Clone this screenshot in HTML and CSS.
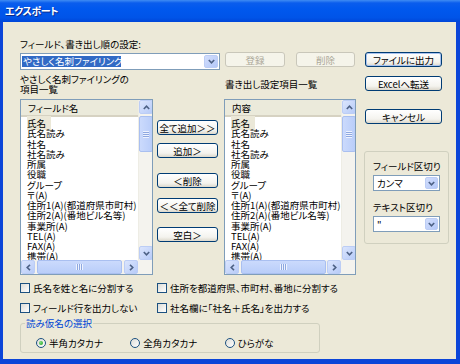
FILE: index.html
```html
<!DOCTYPE html>
<html>
<head>
    <meta charset="utf-8">
    <title>エクスポート</title>
    <link rel="stylesheet" href="styles.css">
</head>
<body>
    <div class="window">
        <div class="titlebar">エクスポート</div>
        <div class="client">
            <div class="main">
                <div class="lbl top-lbl">フィールド、書き出し順の設定:</div>

                <div class="combo-row">
                    <div class="combo">
                        <span class="combo-sel">やさしく名刺ファイリング</span>
                        <span class="drop"><svg width="7" height="5" viewBox="0 0 7 5"><polyline points="0.8,1 3.5,3.8 6.2,1" /></svg></span>
                    </div>
                    <div class="btn disabled btn-reg">登録</div>
                    <div class="btn disabled btn-del">削除</div>
                </div>

                <div class="list-labels">
                    <div class="lbl src-lbl">やさしく名刺ファイリングの<br>項目一覧</div>
                    <div class="lbl dst-lbl">書き出し設定項目一覧</div>
                </div>

                <div class="lists">
                    <div class="listview">
                        <div class="lv-content">
                            <div class="lv-head">フィールド名</div>
                            <div class="lv-items">
                                <div><span class="focus">氏名</span></div>
                                <div>氏名読み</div>
                                <div>社名</div>
                                <div>社名読み</div>
                                <div>所属</div>
                                <div>役職</div>
                                <div>グループ</div>
                                <div>〒(A)</div>
                                <div>住所1(A)(都道府県市町村)</div>
                                <div>住所2(A)(番地ビル名等)</div>
                                <div>事業所(A)</div>
                                <div>TEL(A)</div>
                                <div>FAX(A)</div>
                                <div>携帯(A)</div>
                            </div>
                        </div>
                        <div class="vscroll">
                            <span class="sb-btn"><svg width="7" height="5" viewBox="0 0 7 5"><polyline points="0.8,4 3.5,1.2 6.2,4" /></svg></span>
                            <span class="sb-thumb v"><i></i></span>
                            <span class="sb-fill"></span>
                            <span class="sb-btn"><svg width="7" height="5" viewBox="0 0 7 5"><polyline points="0.8,1 3.5,3.8 6.2,1" /></svg></span>
                        </div>
                        <div class="hscroll">
                            <span class="sb-btn"><svg width="5" height="7" viewBox="0 0 5 7"><polyline points="4,0.8 1.2,3.5 4,6.2" /></svg></span>
                            <span class="sb-thumb h"><i></i></span>
                            <span class="sb-fill"></span>
                            <span class="sb-btn"><svg width="5" height="7" viewBox="0 0 5 7"><polyline points="1,0.8 3.8,3.5 1,6.2" /></svg></span>
                        </div>
                        <div class="corner"></div>
                    </div>

                    <div class="mid-buttons">
                        <div class="btn b-alladd">全て追加＞＞</div>
                        <div class="btn b-add">追加＞</div>
                        <div class="btn b-del">＜削除</div>
                        <div class="btn b-alldel">＜＜全て削除</div>
                        <div class="btn b-blank">空白＞</div>
                    </div>

                    <div class="listview">
                        <div class="lv-content">
                            <div class="lv-head">内容</div>
                            <div class="lv-items">
                                <div><span class="focus">氏名</span></div>
                                <div>氏名読み</div>
                                <div>社名</div>
                                <div>社名読み</div>
                                <div>所属</div>
                                <div>役職</div>
                                <div>グループ</div>
                                <div>〒(A)</div>
                                <div>住所1(A)(都道府県市町村)</div>
                                <div>住所2(A)(番地ビル名等)</div>
                                <div>事業所(A)</div>
                                <div>TEL(A)</div>
                                <div>FAX(A)</div>
                                <div>携帯(A)</div>
                            </div>
                        </div>
                        <div class="vscroll">
                            <span class="sb-btn"><svg width="7" height="5" viewBox="0 0 7 5"><polyline points="0.8,4 3.5,1.2 6.2,4" /></svg></span>
                            <span class="sb-thumb v"><i></i></span>
                            <span class="sb-fill"></span>
                            <span class="sb-btn"><svg width="7" height="5" viewBox="0 0 7 5"><polyline points="0.8,1 3.5,3.8 6.2,1" /></svg></span>
                        </div>
                        <div class="hscroll">
                            <span class="sb-btn"><svg width="5" height="7" viewBox="0 0 5 7"><polyline points="4,0.8 1.2,3.5 4,6.2" /></svg></span>
                            <span class="sb-thumb h"><i></i></span>
                            <span class="sb-fill"></span>
                            <span class="sb-btn"><svg width="5" height="7" viewBox="0 0 5 7"><polyline points="1,0.8 3.8,3.5 1,6.2" /></svg></span>
                        </div>
                        <div class="corner"></div>
                    </div>
                </div>

                <div class="checks">
                    <div class="check"><span class="box"></span>氏名を姓と名に分割する</div>
                    <div class="check"><span class="box"></span>住所を都道府県、市町村、番地に分割する</div>
                    <div class="check"><span class="box"></span>フィールド行を出力しない</div>
                    <div class="check"><span class="box"></span>社名欄に「社名＋氏名」を出力する</div>
                </div>

                <fieldset class="kana">
                    <legend>読み仮名の選択</legend>
                    <div class="radio"><span class="dot checked"></span>半角カタカナ</div>
                    <div class="radio"><span class="dot"></span>全角カタカナ</div>
                    <div class="radio"><span class="dot"></span>ひらがな</div>
                </fieldset>
            </div>

            <div class="side">
                <div class="btn default b-file">ファイルに出力</div>
                <div class="btn b-excel">Excelへ転送</div>
                <div class="btn b-cancel">キャンセル</div>

                <div class="delim">
                    <div class="lbl">フィールド区切り</div>
                    <div class="select">
                        <span class="select-val">カンマ</span>
                        <span class="drop"><svg width="7" height="5" viewBox="0 0 7 5"><polyline points="0.8,1 3.5,3.8 6.2,1" /></svg></span>
                    </div>
                    <div class="lbl lbl-second">テキスト区切り</div>
                    <div class="select">
                        <span class="select-val">"</span>
                        <span class="drop"><svg width="7" height="5" viewBox="0 0 7 5"><polyline points="0.8,1 3.5,3.8 6.2,1" /></svg></span>
                    </div>
                </div>
            </div>
        </div>
    </div>
</body>
</html>
```

FILE: styles.css
```css
* {
    box-sizing: border-box;
}
body {
    margin: 0;
    background: #fff;
    font-family: "Noto Sans CJK JP", sans-serif;
    font-size: 9.5px;
    font-feature-settings: "palt";
    color: #000;
}
.window {
    width: 460px;
    height: 364px;
    display: flex;
    flex-direction: column;
}
.titlebar {
    height: 22px;
    flex: none;
    padding-left: 5px;
    line-height: 22px;
    font-size: 10px;
    letter-spacing: -0.4px;
    font-weight: bold;
    color: #fff;
    background: linear-gradient(#3f8cf3 0, #0a5ded 3px, #0058ee 40%, #0054e8 80%, #0046d8 100%);
    text-shadow: 1px 1px 0 #0a2a8a;
}
.client {
    flex: 1;
    display: flex;
    background: #ece9d8;
    border: solid #0b45d8;
    border-width: 0 4px 5px 3px;
    padding: 16px 0 0 17px;
}
.lbl {
    line-height: 12px;
}

/* left part */
.main {
    width: 336px;
}
.combo-row {
    display: flex;
    align-items: flex-start;
    margin-top: 2px;
}
.combo {
    width: 200px;
    height: 17px;
    margin-top: 1px;
    display: flex;
    align-items: center;
    justify-content: space-between;
    background: #fff;
    border: 1px solid #7f9db9;
    padding: 0 1px 0 1px;
}
.combo-sel {
    background: #316ac5;
    color: #fff;
    line-height: 11px;
    padding: 0 2px 0 1px;
    width: 99px;
    white-space: nowrap;
}
.drop {
    width: 14px;
    height: 13px;
    display: flex;
    align-items: center;
    justify-content: center;
    border: 1px solid #bccdf5;
    border-radius: 2px;
    background: linear-gradient(135deg, #d2defc, #b4c8f8);
}
.drop polyline, .sb-btn polyline {
    fill: none;
    stroke: #4d6185;
    stroke-width: 1.6;
}
.btn {
    height: 15px;
    display: flex;
    align-items: center;
    justify-content: center;
    line-height: 12px;
    border: 1px solid #003c74;
    border-radius: 3px;
    background: linear-gradient(#ffffff, #f4f3ee 70%, #dcd8cc);
    white-space: nowrap;
}
.btn.disabled {
    border-color: #c9c7ba;
    color: #aca899;
    background: #f5f4ea;
}
.btn.default {
    box-shadow: inset 0 0 0 1px #a9c3ef;
}
.btn-reg {
    width: 60px;
    margin-left: 5px;
}
.btn-del {
    width: 59px;
    margin-left: 11px;
}
.list-labels {
    display: flex;
    align-items: center;
    margin-top: 4px;
    height: 20px;
}
.src-lbl {
    width: 205px;
    line-height: 10px;
}
.lists {
    display: flex;
    margin-top: 5px;
    height: 176px;
}
.listview {
    width: 133px;
    height: 176px;
    border: 1px solid #7f9db9;
    background: #fff;
    display: grid;
    grid-template-columns: 1fr 14px;
    grid-template-rows: 1fr 14px;
    overflow: hidden;
}
.listview + .mid-buttons + .listview {
    width: 132px;
}
.lv-content {
    overflow: hidden;
}
.lv-head {
    height: 17px;
    line-height: 16px;
    padding-left: 7px;
    background: #ebeadb;
    border-bottom: 2px solid #d6d2c2;
}
.lv-items {
    padding: 1px 0 0 6px;
    line-height: 10.26px;
    white-space: nowrap;
}
.focus {
    background: #ebe8d8;
    padding-right: 5px;
}
.vscroll, .hscroll {
    display: flex;
    background: #f4f3ee;
}
.vscroll {
    flex-direction: column;
    border-left: 1px solid #eeede5;
}
.sb-btn {
    width: 14px;
    height: 14px;
    flex: none;
    display: flex;
    align-items: center;
    justify-content: center;
    border: 1px solid #bccdf5;
    border-radius: 2px;
    background: linear-gradient(135deg, #dbe5fd, #b7cbf8);
}
.sb-thumb {
    display: flex;
    align-items: center;
    justify-content: center;
    border: 1px solid #a9bff0;
    border-radius: 2px;
    background: linear-gradient(90deg, #cbdafc, #b9cdf9);
}
.sb-thumb.v {
    width: 14px;
    height: 36px;
    margin-top: 2px;
}
.sb-thumb.h {
    height: 14px;
    width: 85px;
    margin-left: 2px;
    background: linear-gradient(#cbdafc, #b9cdf9);
}
.sb-thumb.v i {
    width: 6px;
    height: 7px;
    background: repeating-linear-gradient(#eef3fe 0 1px, #8ea8e0 1px 2px);
}
.sb-thumb.h i {
    width: 7px;
    height: 6px;
    background: repeating-linear-gradient(90deg, #eef3fe 0 1px, #8ea8e0 1px 2px);
}
.sb-fill {
    flex: 1;
}
.corner {
    background: #f4f3ee;
}
.mid-buttons {
    width: 61px;
    margin: 0 6px 0 4px;
    display: flex;
    flex-direction: column;
}
.b-alladd { margin-top: 21px; }
.b-add { margin-top: 8px; }
.b-del { margin-top: 15px; }
.b-alldel { margin-top: 10px; }
.b-blank { margin-top: 14px; }

.checks {
    display: grid;
    grid-template-columns: 137px auto;
    grid-auto-rows: 10px;
    row-gap: 10px;
    margin-top: 8px;
}
.check, .radio {
    display: flex;
    align-items: center;
    gap: 3px;
    line-height: 10px;
    white-space: nowrap;
}
.box {
    width: 10px;
    height: 10px;
    flex: none;
    border: 1px solid #1c5180;
    background: linear-gradient(135deg, #dcdcd7, #fff);
}
.kana {
    margin: 5px 0 0 0;
    width: 300px;
    height: 35px;
    border: 1px solid #d0d0bf;
    border-radius: 3px;
    padding: 6px 0 0 15px;
    display: flex;
    min-width: 0;
}
.kana legend {
    color: #0046d5;
    line-height: 10px;
    padding: 0 1px;
    margin-left: -11px;
}
.radio {
    width: 94.5px;
}
.dot {
    width: 10px;
    height: 10px;
    flex: none;
    border-radius: 50%;
    border: 1px solid #1c5180;
    background: linear-gradient(135deg, #dcdcd7, #fff);
    display: flex;
    align-items: center;
    justify-content: center;
}
.dot.checked::after {
    content: "";
    width: 4px;
    height: 4px;
    border-radius: 50%;
    background: radial-gradient(circle at 35% 35%, #7ee07e, #1c9a1c);
}

/* right part */
.side {
    width: 85px;
    margin-left: 8px;
    display: flex;
    flex-direction: column;
}
.side .btn {
    width: 77px;
    margin-left: 1px;
}
.b-file { margin-top: 14px; }
.b-excel { margin-top: 9px; }
.b-cancel { margin-top: 18px; }
.delim {
    margin-top: 27px;
    height: 93px;
    border: 1px solid #d0d0bf;
    border-radius: 3px;
    padding: 4px 0 0 8px;
}
.delim .lbl {
    line-height: 10px;
    margin-top: 5px;
}
.delim .lbl-second {
    margin-top: 11px;
}
.select {
    width: 67px;
    height: 16px;
    margin-top: 4px;
    display: flex;
    align-items: center;
    justify-content: space-between;
    background: #fff;
    border: 1px solid #7f9db9;
    padding: 0 1px 0 3px;
}
.select .drop {
    width: 13px;
    height: 12px;
}
```
